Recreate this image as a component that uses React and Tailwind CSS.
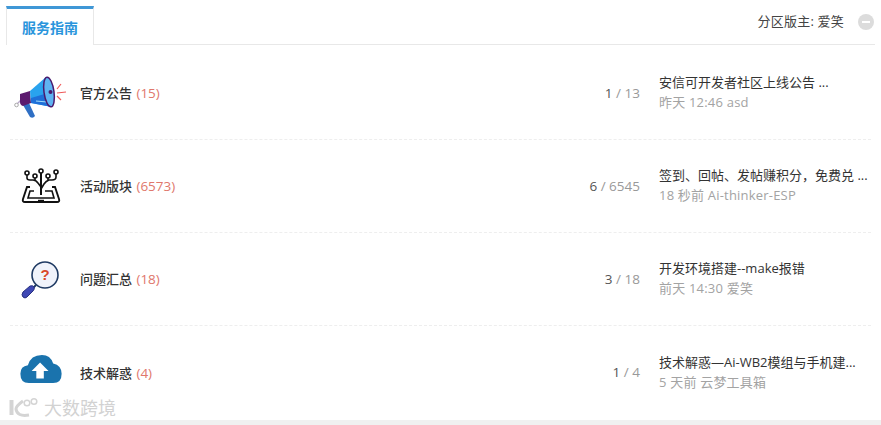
const font = { fontFamily: '"Open Sans","Noto Sans CJK SC",sans-serif' };

function Megaphone() {
  return (
    <svg width="54" height="52" viewBox="0 0 54 52">
      <path d="M9 38 L15 36 L21 49 Q19 52 16 50 Z" fill="#2f6fc4" />
      <path d="M7 33 L2 38" stroke="#b9a9c9" strokeWidth="1.5" fill="none" />
      <circle cx="2.5" cy="38" r="1.8" fill="#fff" stroke="#aaa" strokeWidth="1" />
      <path d="M6 27 L16 24 L17 36 L9 39 Q6 38 6 35 Z" fill="#5c1a6e" />
      <path d="M16 24 L32 10 L38 40 L17 36 Z" fill="#29a3ee" />
      <path d="M17 31 L34 26 L38 40 L17 36 Z" fill="#1e6fd8" />
      <path d="M22 34 L33 35" stroke="#9fdcfa" strokeWidth="1.2" />
      <ellipse cx="35" cy="25" rx="5" ry="15" transform="rotate(-8 35 25)" fill="#5fb4f2" stroke="#4a1a6e" strokeWidth="1.5" />
      <circle cx="36.5" cy="25" r="2" fill="#4a1a6e" />
      <path d="M43 22 L47 17 M43 26 L52 25 M43 29 L47 33" stroke="#ef5a5a" strokeWidth="1.2" fill="none" />
    </svg>
  );
}

function Tree() {
  return (
    <svg width="42" height="36" viewBox="0 0 42 36" fill="none" stroke="#111" strokeWidth="1.6">
      <path d="M9 19 H6 L2 31 Q1 34 4 34 H36 Q39 34 38 31 L34 19 H31" strokeWidth="1.9" />
      <path d="M13 23 H9 L7 30 H33 L31 23 H24" />
      <path d="M20 5 V27" strokeWidth="2" />
      <path d="M6 7 V10 Q6 12 9 12 H12 Q15 12 17 15 L20 19" />
      <path d="M14 10 V13" />
      <path d="M35 6 V9 Q35 12 31 12 H28 Q25 13 23 16 L20 21" />
      <path d="M27 10 V12" />
      <circle cx="6" cy="5" r="2" fill="#fff" />
      <circle cx="14" cy="8" r="2" fill="#fff" />
      <circle cx="20" cy="3" r="2" fill="#fff" />
      <circle cx="27" cy="8" r="2" fill="#fff" />
      <circle cx="35" cy="4" r="2" fill="#fff" />
      <path d="M17 32.5 H23" strokeWidth="1.4" />
    </svg>
  );
}

function Magnifier() {
  return (
    <svg width="42" height="42" viewBox="0 0 42 42">
      <g transform="translate(2 1)">
        <circle cx="25" cy="16" r="13" fill="#f0f3fb" stroke="#1f3a63" strokeWidth="1.6" />
        <path d="M16 26 L12 30" stroke="#1f3a63" strokeWidth="2" />
        <path d="M3 38 Q1 36 3 33 L10 27 Q13 26 14 28 Q15 30 13 32 L7 38 Q5 40 3 38 Z" fill="#3f48b5" stroke="#27307f" strokeWidth="1" />
        <text x="25" y="21" textAnchor="middle" fontSize="15" fontWeight="700" fill="#d9482b" fontFamily="Liberation Sans">?</text>
      </g>
    </svg>
  );
}

function Cloud() {
  return (
    <svg width="46" height="30" viewBox="0 0 46 32" className="mb-[7px]">
      <path d="M10 31 Q1 31 1 21 Q1 13 9 12 Q12 1 24 1 Q33 1 36 10 Q45 12 45 21 Q45 31 36 31 Z" fill="#1a73ad" />
      <path d="M22 9 L31 18 H26 V26 H18 V18 H13 Z" fill="#fff" />
    </svg>
  );
}

const rows = [
  { icon: <Megaphone />, name: "官方公告", count: "(15)", a: "1", b: "13", t: "安信可开发者社区上线公告 ...", m: "昨天 12:46 asd", pad: "pl-[4px]" },
  { icon: <Tree />, name: "活动版块", count: "(6573)", a: "6", b: "6545", t: "签到、回帖、发帖赚积分，免费兑 ...", m: "18 秒前 Ai-thinker-ESP", pad: "pl-[11px]" },
  { icon: <Magnifier />, name: "问题汇总", count: "(18)", a: "3", b: "18", t: "开发环境搭建--make报错", m: "前天 14:30 爱笑", pad: "pl-[8px]" },
  { icon: <Cloud />, name: "技术解惑", count: "(4)", a: "1", b: "4", t: "技术解惑—Ai-WB2模组与手机建...", m: "5 天前 云梦工具箱", pad: "pl-[8px]" },
];

export default function App() {
  return (
    <div style={font} className="relative w-[881px] h-[425px] overflow-hidden bg-white text-[13px]">
      <div className="pt-[6px] pl-[6px] pr-[6px]">
        <div className="flex h-[39px] items-stretch border-b border-[#e8e8e8]">
          <div className="w-[88px] h-[39px] border-t-[3px] border-x border-t-[#3f97d6] border-x-[#e8e8e8] bg-white flex items-center justify-center text-[#2a95dc] font-semibold text-[14px]">
            服务指南
          </div>
          <div className="flex-1 flex items-center justify-end text-[#444] pr-[1px] pb-[6px]">
            <span className="tracking-[0.2px]">分区版主: 爱笑</span>
            <span className="ml-[14px] w-[16px] h-[16px] rounded-full bg-[#dcdcdc] flex items-center justify-center">
              <span className="block w-[8px] h-[2px] bg-white" />
            </span>
          </div>
        </div>
      </div>
      <div className="px-[10px] pt-[2px]">
        {rows.map((r, i) => (
          <div key={i} className={`flex items-center h-[93px] ${i < 3 ? "border-b border-dashed border-[#eeeeee]" : ""}`}>
            <div className={`w-[70px] shrink-0 flex items-center ${r.pad}`}>{r.icon}</div>
            <div className="flex-1 text-[#333] font-medium pt-[1px]">
              {r.name} <span className="ml-[1px] font-normal text-[13.5px] text-[#e0776c]">{r.count}</span>
            </div>
            <div className="w-[120px] text-right text-[13.5px] text-[#999]">
              <span className="text-[#555]">{r.a}</span> / {r.b}
            </div>
            <div className="w-[231px] pl-[19px] pb-[2px] shrink-0 leading-[20px]">
              <div className="text-[#333] whitespace-nowrap">{r.t}</div>
              <div className="text-[#a3a3a3] whitespace-nowrap tracking-[0.2px]">{r.m}</div>
            </div>
          </div>
        ))}
      </div>
      <div className="absolute left-0 right-0 bottom-0 h-[5px] bg-[#f0f0f0]" />
      <div className="absolute left-[8px] top-[397px] flex items-center gap-[3px]">
        <svg width="33" height="22" viewBox="0 0 33 22" fill="none" stroke="#d4d4d4">
          <path d="M3.5 3 V18" strokeWidth="4" />
          <path d="M15 4 Q8 9 8 12 Q9 20 21 18" strokeWidth="3" />
          <circle cx="19" cy="6" r="2.8" strokeWidth="1.5" />
          <circle cx="26" cy="4.5" r="2.8" strokeWidth="1.5" />
        </svg>
        <span className="text-[18px] leading-[22px] text-[#d2d2d2] [text-shadow:0_0_1px_#ffffff]">大数跨境</span>
      </div>
    </div>
  );
}
